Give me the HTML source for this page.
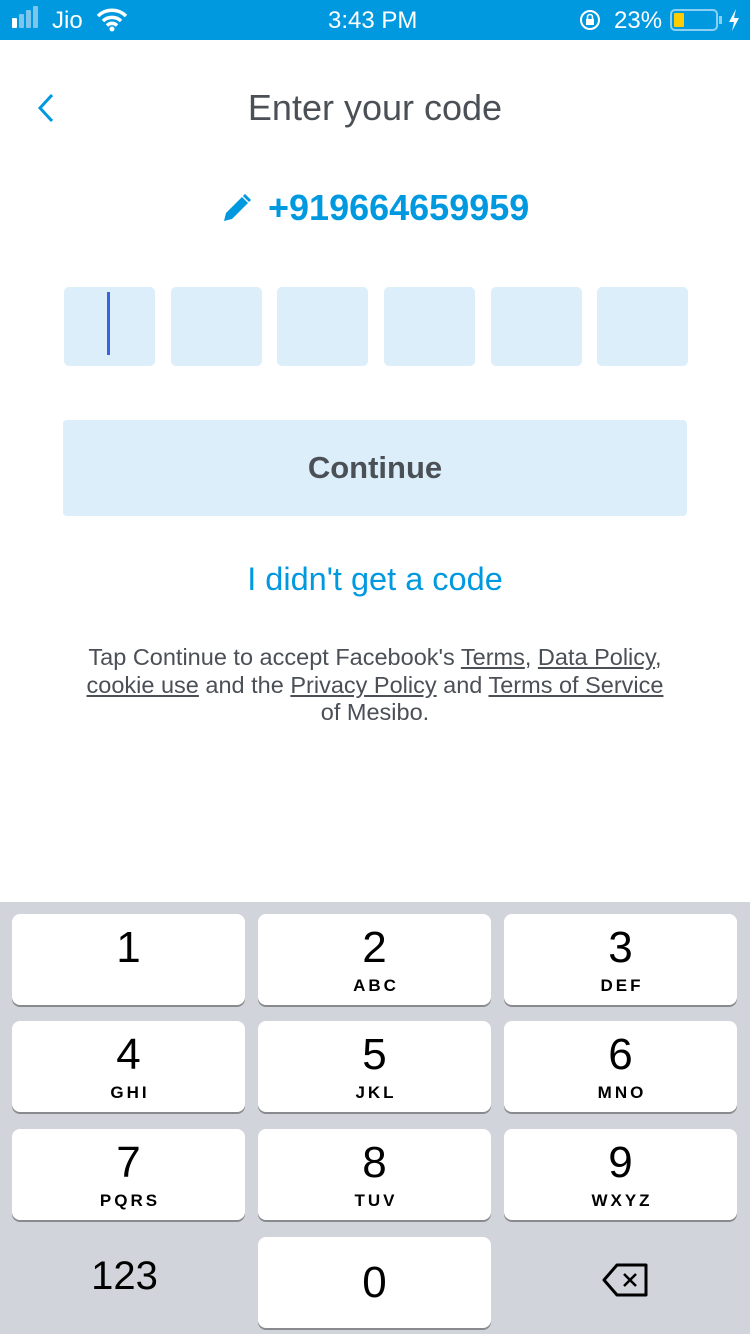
<!DOCTYPE html>
<html><head><meta charset="utf-8"><style>
*{margin:0;padding:0;box-sizing:border-box}
body{width:750px;height:1334px;background:#fff;font-family:"Liberation Sans",sans-serif;position:relative;overflow:hidden}
.abs{position:absolute}
.sb{top:0;left:0;width:750px;height:40px;background:#0099e0;color:#fff;font-size:24px}
.box{top:287px;width:91px;height:79px;background:#dbeef9;border-radius:5px}
.kb{top:902px;left:0;width:750px;height:432px;background:#d1d4da}
.key{width:233px;height:91px;background:#fff;border-radius:8px;box-shadow:0 2px 0 #898a8d;text-align:center;color:#000}
.key .n{font-size:44px;line-height:44px;margin-top:12px}
.key .l{font-size:17px;font-weight:bold;letter-spacing:3px;margin-top:6px;padding-left:3px}
.legal{top:644px;left:0;width:750px;text-align:center;font-size:23.5px;line-height:27.5px;color:#4b4f56}
.legal u{text-decoration:underline}
</style></head><body>
<div class="abs sb">
 <div class="abs" style="left:12px;top:18px;width:5px;height:10px;background:#fff;border-radius:1px"></div>
 <div class="abs" style="left:19px;top:14px;width:5px;height:14px;background:#7cc6ee;border-radius:1px"></div>
 <div class="abs" style="left:26px;top:10px;width:5px;height:18px;background:#7cc6ee;border-radius:1px"></div>
 <div class="abs" style="left:33px;top:6px;width:5px;height:22px;background:#7cc6ee;border-radius:1px"></div>
 <div class="abs" style="left:52px;top:7px">Jio</div>
 <svg class="abs" style="left:96px;top:8px" width="32" height="24" viewBox="0 0 32 24"><path d="M2 8a20 20 0 0 1 28 0M7 13a13 13 0 0 1 18 0M11 17.5a7 7 0 0 1 10 0" stroke="#fff" stroke-width="3.5" fill="none"/><circle cx="16" cy="21" r="2.5" fill="#fff"/></svg>
 <div class="abs" style="left:328px;top:7px">3:43 PM</div>
 <svg class="abs" style="left:578px;top:8px" width="24" height="24" viewBox="0 0 24 24"><circle cx="12" cy="12" r="9" stroke="#fff" stroke-width="2" fill="none"/><rect x="8" y="11" width="8" height="6" fill="#fff"/><path d="M9.5 11V9a2.5 2.5 0 0 1 5 0v2" stroke="#fff" stroke-width="1.6" fill="none"/></svg>
 <div class="abs" style="left:614px;top:7px">23%</div>
 <div class="abs" style="left:670px;top:9px;width:48px;height:22px;border:2px solid #8bd0f2;border-radius:5px"><div style="margin:2px;width:10px;height:14px;background:#fc0;border-radius:1px"></div></div>
 <div class="abs" style="left:719px;top:16px;width:3px;height:8px;background:#8bd0f2"></div>
 <svg class="abs" style="left:728px;top:8px" width="12" height="24" viewBox="0 0 12 24"><path d="M8 1L1 14h5l-2 9 7-13H6z" fill="#fff"/></svg>
</div>
<svg class="abs" style="left:36px;top:93px" width="20" height="30" viewBox="0 0 20 30"><path d="M16 2L4 15l12 13" stroke="#0099e0" stroke-width="3" fill="none"/></svg>
<div class="abs" style="top:87px;left:0;width:750px;text-align:center;font-size:36px;color:#4b4f56">Enter your code</div>
<svg class="abs" style="left:222px;top:194px" width="30" height="28" viewBox="0 0 30 28"><path d="M2 27l2-8L20 3l6 6L10 25z" fill="#0099e0"/><path d="M22 1l6 6" stroke="#0099e0" stroke-width="3"/></svg>
<div class="abs" style="top:187px;left:268px;font-size:36px;font-weight:bold;color:#0099e0">+919664659959</div>
<div class="abs box" style="left:64px"><div class="abs" style="left:43px;top:5px;width:3px;height:63px;background:#3a63e0"></div></div>
<div class="abs box" style="left:171px"></div>
<div class="abs box" style="left:277px"></div>
<div class="abs box" style="left:384px"></div>
<div class="abs box" style="left:491px"></div>
<div class="abs box" style="left:597px"></div>
<div class="abs" style="top:420px;left:63px;width:624px;height:96px;background:#dbeef9;border-radius:4px;text-align:center;line-height:96px;font-size:31px;font-weight:bold;color:#4b4f56">Continue</div>
<div class="abs" style="top:561px;left:0;width:750px;text-align:center;font-size:32.5px;color:#0099e0">I didn't get a code</div>
<div class="abs legal">Tap Continue to accept Facebook's <u>Terms</u>, <u>Data Policy</u>,<br><u>cookie use</u> and the <u>Privacy Policy</u> and <u>Terms of Service</u><br>of Mesibo.</div>
<div class="abs kb">
 <div class="abs key" style="left:12px;top:12px"><div class="n" style="margin-top:12px">1</div></div>
 <div class="abs key" style="left:258px;top:12px"><div class="n">2</div><div class="l">ABC</div></div>
 <div class="abs key" style="left:504px;top:12px"><div class="n">3</div><div class="l">DEF</div></div>
 <div class="abs key" style="left:12px;top:119px"><div class="n">4</div><div class="l">GHI</div></div>
 <div class="abs key" style="left:258px;top:119px"><div class="n">5</div><div class="l">JKL</div></div>
 <div class="abs key" style="left:504px;top:119px"><div class="n">6</div><div class="l">MNO</div></div>
 <div class="abs key" style="left:12px;top:227px"><div class="n">7</div><div class="l">PQRS</div></div>
 <div class="abs key" style="left:258px;top:227px"><div class="n">8</div><div class="l">TUV</div></div>
 <div class="abs key" style="left:504px;top:227px"><div class="n">9</div><div class="l">WXYZ</div></div>
 <div class="abs" style="left:8px;top:352px;width:233px;text-align:center;font-size:40px;color:#000">123</div>
 <div class="abs key" style="left:258px;top:335px"><div class="n" style="margin-top:24px">0</div></div>
 <svg class="abs" style="left:600px;top:360px" width="50" height="36" viewBox="0 0 50 36"><path d="M17 3h29v30H17L4 18z" stroke="#000" stroke-width="3" fill="none" stroke-linejoin="round"/><path d="M24 12l12 12M36 12L24 24" stroke="#000" stroke-width="2.5"/></svg>
</div>
</body></html>
